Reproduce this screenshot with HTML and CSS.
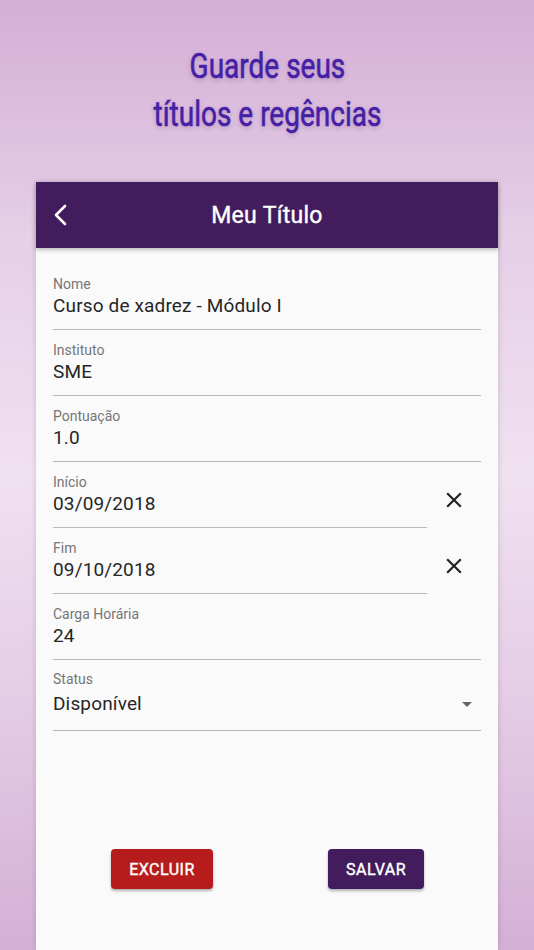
FILE: index.html
```html
<!DOCTYPE html>
<html lang="pt-BR">
<head>
    <meta charset="UTF-8">
    <meta name="viewport" content="width=device-width, initial-scale=1.0">
    <title>Meu Título</title>
    <link rel="stylesheet" href="styles.css">
</head>
<body>
    <h1 class="headline"><span class="headline-text">Guarde seus<br>títulos e regências</span></h1>

    <div class="card">
        <header class="card-header">
            <button class="back-btn" type="button" aria-label="Voltar">
                <svg width="16" height="24" viewBox="0 0 16 24">
                    <polyline points="12,3 3,12 12,21" fill="none" stroke="#fff" stroke-width="2.6" stroke-linecap="round" stroke-linejoin="round"/>
                </svg>
            </button>
            <h2 class="card-title">Meu Título</h2>
            <span></span>
        </header>

        <form class="title-form">
            <div class="field">
                <label class="field-label">Nome</label>
                <div class="field-value">Curso de xadrez - Módulo I</div>
            </div>

            <div class="field">
                <label class="field-label">Instituto</label>
                <div class="field-value">SME</div>
            </div>

            <div class="field">
                <label class="field-label">Pontuação</label>
                <div class="field-value">1.0</div>
            </div>

            <div class="field-row">
                <div class="field">
                    <label class="field-label">Início</label>
                    <div class="field-value">03/09/2018</div>
                </div>
                <button class="clear-btn" type="button" aria-label="Limpar">
                    <svg width="26" height="26" viewBox="0 0 24 24"><path fill="#212121" d="M19 6.41L17.59 5 12 10.59 6.41 5 5 6.41 10.59 12 5 17.59 6.41 19 12 13.41 17.59 19 19 17.59 13.41 12z"/></svg>
                </button>
            </div>

            <div class="field-row">
                <div class="field">
                    <label class="field-label">Fim</label>
                    <div class="field-value">09/10/2018</div>
                </div>
                <button class="clear-btn" type="button" aria-label="Limpar">
                    <svg width="26" height="26" viewBox="0 0 24 24"><path fill="#212121" d="M19 6.41L17.59 5 12 10.59 6.41 5 5 6.41 10.59 12 5 17.59 6.41 19 12 13.41 17.59 19 19 17.59 13.41 12z"/></svg>
                </button>
            </div>

            <div class="field">
                <label class="field-label">Carga Horária</label>
                <div class="field-value">24</div>
            </div>

            <div class="field field-select">
                <label class="field-label">Status</label>
                <div class="field-value select-value">
                    Disponível
                    <span class="caret"></span>
                </div>
            </div>

            <div class="actions">
                <button class="btn btn-delete" type="button">Excluir</button>
                <button class="btn btn-save" type="submit">Salvar</button>
            </div>
        </form>
    </div>
</body>
</html>
```

FILE: styles.css
```css
/* Page */
html, body {
    margin: 0;
    height: 950px;
    overflow: hidden;
}

body {
    font-family: Roboto, "Noto Sans", sans-serif;
    background: linear-gradient(180deg, #d4aed6 0%, #e6cfe7 25%, #f0e1f0 50%, #e4cbe5 75%, #d4afd6 100%);
}

/* Top headline (condensed look) */
.headline {
    margin: 0;
    height: 182px;
    box-sizing: border-box;
    padding-top: 43px;
    text-align: center;
    font-family: Roboto, sans-serif;
    font-weight: normal;
    font-size: 35px;
    line-height: 48px;
    color: #4520a6;
    text-shadow: 0 2px 6px rgba(60, 20, 90, 0.25);
}

.headline-text {
    display: inline-block;
    transform: scaleX(0.8);
    -webkit-text-stroke: 0.6px #4520a6;
}

/* Card */
.card {
    margin: 0 36px;
    height: 768px;
    background-color: #fafafa;
    box-shadow: 0 0 6px rgba(0, 0, 0, 0.15);
}

.card-header {
    height: 66px;
    display: grid;
    grid-template-columns: 48px 1fr 48px;
    align-items: center;
    background-color: #431c5d;
    box-shadow: 0 2px 4px rgba(0, 0, 0, 0.25);
    position: relative;
}

.back-btn {
    border: none;
    background: none;
    padding: 0 0 0 17px;
    display: flex;
    align-items: center;
    cursor: pointer;
}

.card-title {
    margin: 0;
    text-align: center;
    color: #fff;
    font-size: 23px;
    font-weight: 400;
    letter-spacing: 0.3px;
    -webkit-text-stroke: 0.4px #fff;
}

/* Form fields */
.title-form {
    padding: 16px 17px 0;
}

.field {
    padding: 12px 0 11px;
    border-bottom: 1px solid #b9b9b9;
}

.field-label {
    display: block;
    font-size: 14px;
    line-height: 16px;
    color: #767676;
}

.field-value {
    margin-top: 2px;
    font-size: 19px;
    line-height: 24px;
    letter-spacing: 0.15px;
    color: #262626;
}

.field-row {
    display: flex;
}

.field-row .field {
    flex: 1;
}

.clear-btn {
    width: 54px;
    flex: none;
    border: none;
    background: none;
    padding: 0;
    display: flex;
    align-items: center;
    justify-content: center;
    margin-top: 10px;
    cursor: pointer;
}

.field-select {
    padding: 11px 0 14px;
}

.select-value {
    margin-top: 5px;
    display: flex;
    align-items: center;
    justify-content: space-between;
}

.caret {
    margin-right: 9px;
    width: 0;
    height: 0;
    border-left: 5px solid transparent;
    border-right: 5px solid transparent;
    border-top: 5px solid #666;
}

/* Buttons */
.actions {
    display: flex;
    gap: 115px;
    padding: 118px 0 0 58px;
}

.btn {
    height: 40px;
    border: none;
    border-radius: 4px;
    color: #fff;
    font-family: Roboto, sans-serif;
    font-size: 16px;
    font-weight: 400;
    letter-spacing: 0.5px;
    text-transform: uppercase;
    -webkit-text-stroke: 0.4px #fff;
    box-shadow: 0 2px 3px rgba(0, 0, 0, 0.3);
    cursor: pointer;
}

.btn-delete {
    width: 102px;
    background-color: #b71c1c;
}

.btn-save {
    width: 96px;
    background-color: #431c5d;
}
```
